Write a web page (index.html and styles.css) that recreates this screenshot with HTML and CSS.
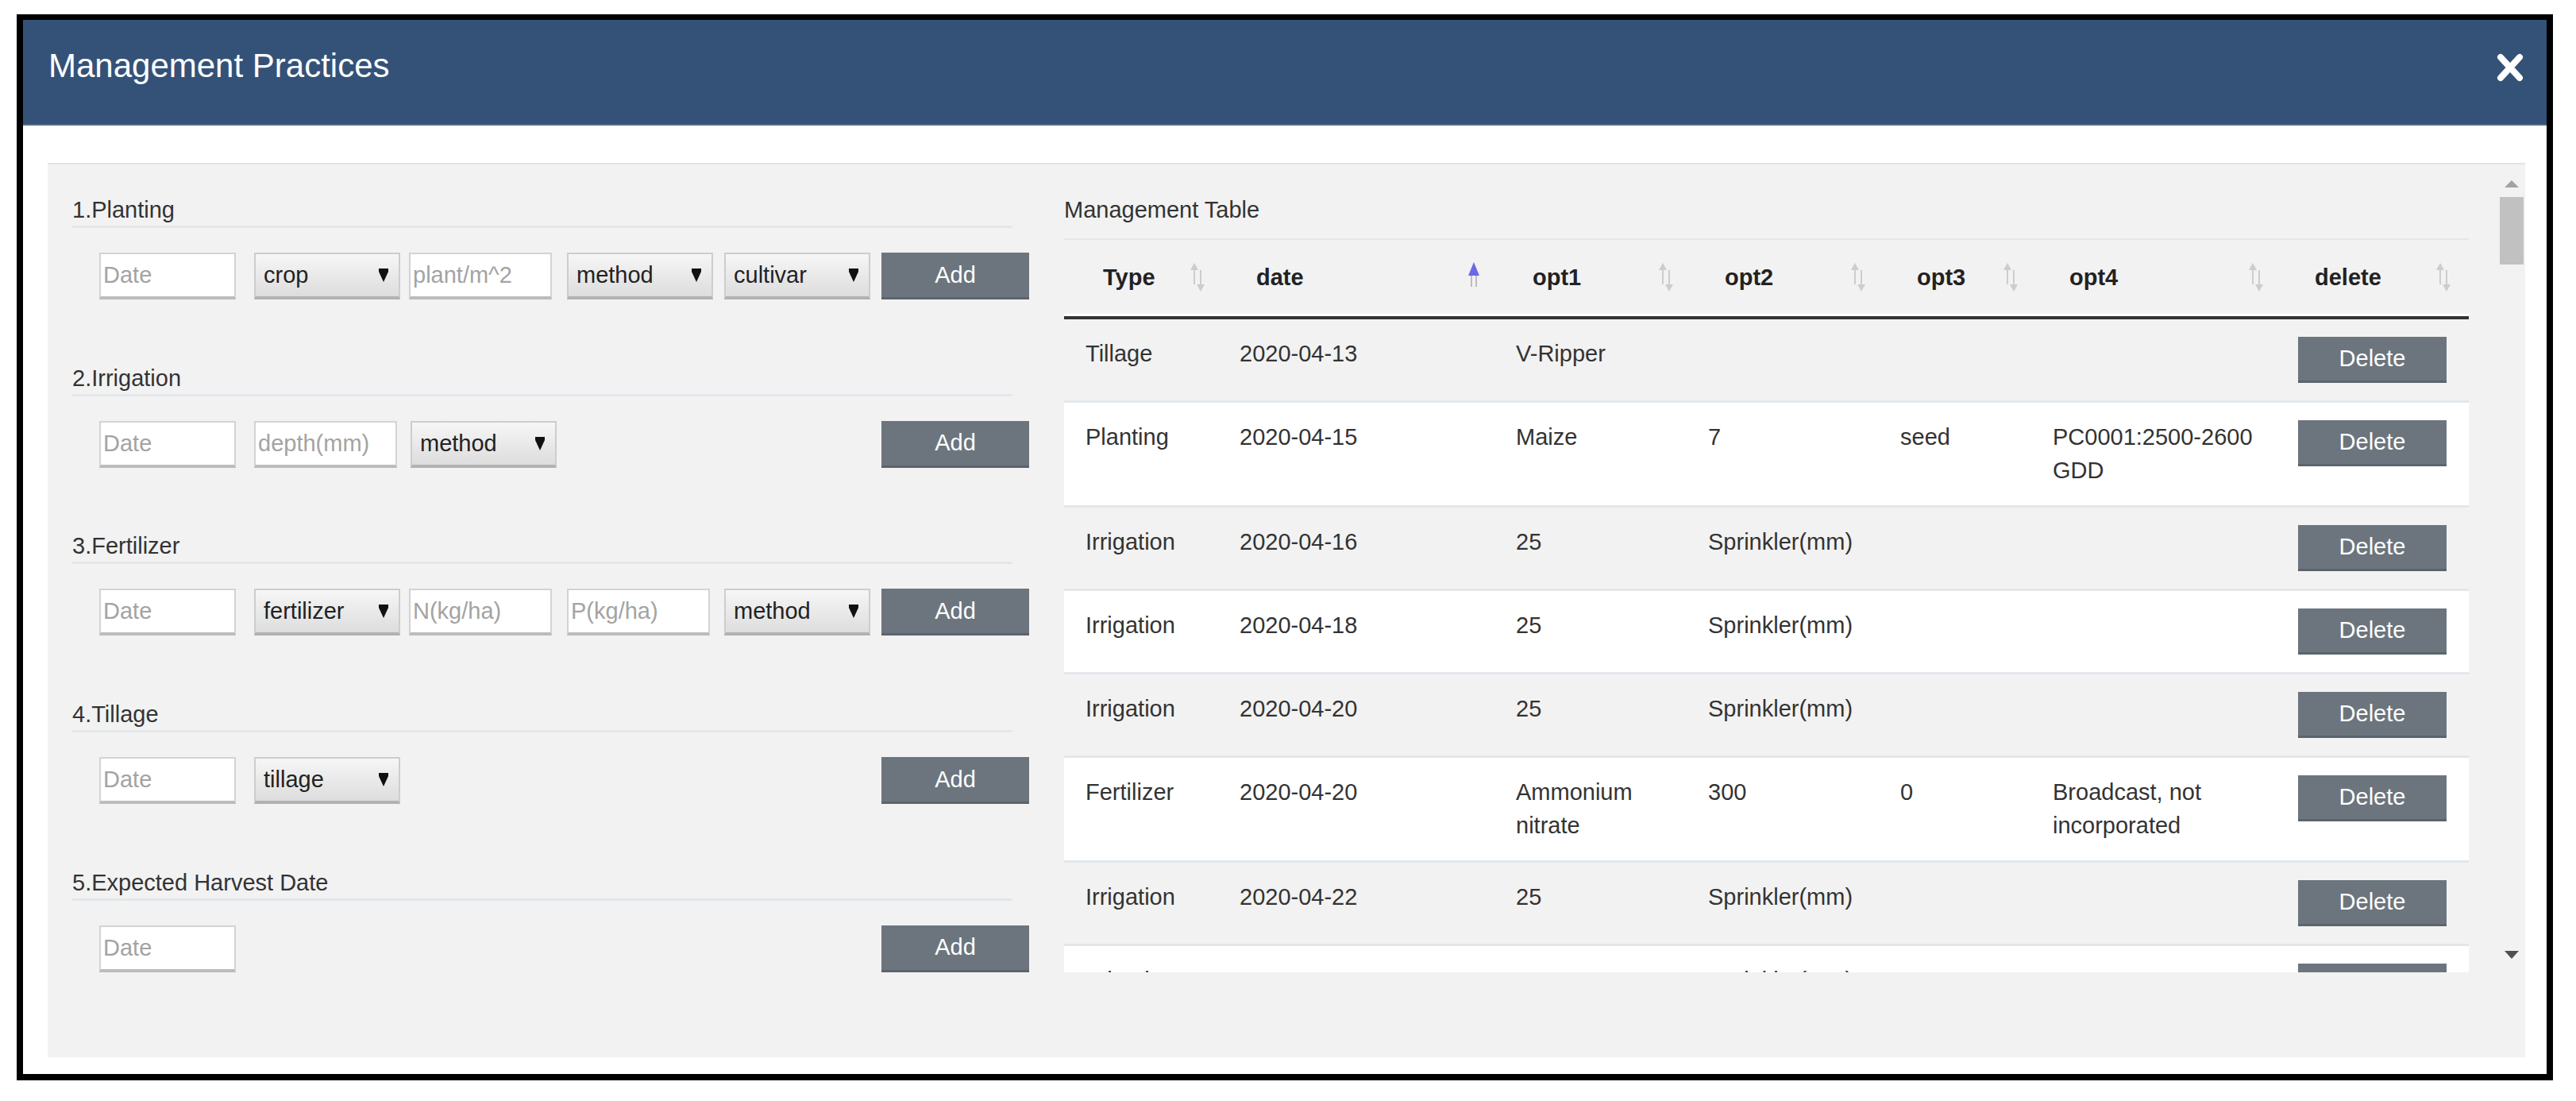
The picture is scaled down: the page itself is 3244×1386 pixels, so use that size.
FILE: index.html
```html
<!DOCTYPE html>
<html lang="en">
<head>
<meta charset="utf-8">
<title>Management Practices</title>
<link rel="stylesheet" href="styles.css">
</head>
<body>
<div class="modal">
  <header class="modal-header">
    <h1 class="modal-title">Management Practices</h1>
    <button class="close" aria-label="Close">
      <svg width="34" height="36" viewBox="0 0 34 36"><path d="M5 5 L29 31 M29 5 L5 31" stroke="#fff" stroke-width="8" stroke-linecap="round"/></svg>
    </button>
  </header>
  <div class="modal-body">
    <div class="panel">
      <div class="scroll">
        <div class="left">
          <section class="sec">
            <h2 class="sec-title">1.Planting</h2>
            <div class="form-row">
              <input class="in" placeholder="Date">
              <div class="sel ml23"><span>crop</span><svg class="caret" width="14" height="17" viewBox="0 0 14 17"><path d="M1 0H13V4L7 17L1 4Z"/></svg></div>
              <input class="in w180 ml11" placeholder="plant/m^2">
              <div class="sel ml19"><span>method</span><svg class="caret" width="14" height="17" viewBox="0 0 14 17"><path d="M1 0H13V4L7 17L1 4Z"/></svg></div>
              <div class="sel ml14"><span>cultivar</span><svg class="caret" width="14" height="17" viewBox="0 0 14 17"><path d="M1 0H13V4L7 17L1 4Z"/></svg></div>
              <button class="btn add">Add</button>
            </div>
          </section>
          <section class="sec">
            <h2 class="sec-title">2.Irrigation</h2>
            <div class="form-row">
              <input class="in" placeholder="Date">
              <input class="in w180 ml23" placeholder="depth(mm)">
              <div class="sel ml17"><span>method</span><svg class="caret" width="14" height="17" viewBox="0 0 14 17"><path d="M1 0H13V4L7 17L1 4Z"/></svg></div>
              <button class="btn add">Add</button>
            </div>
          </section>
          <section class="sec">
            <h2 class="sec-title">3.Fertilizer</h2>
            <div class="form-row">
              <input class="in" placeholder="Date">
              <div class="sel ml23"><span>fertilizer</span><svg class="caret" width="14" height="17" viewBox="0 0 14 17"><path d="M1 0H13V4L7 17L1 4Z"/></svg></div>
              <input class="in w180 ml11" placeholder="N(kg/ha)">
              <input class="in w180 ml19" placeholder="P(kg/ha)">
              <div class="sel ml18"><span>method</span><svg class="caret" width="14" height="17" viewBox="0 0 14 17"><path d="M1 0H13V4L7 17L1 4Z"/></svg></div>
              <button class="btn add">Add</button>
            </div>
          </section>
          <section class="sec">
            <h2 class="sec-title">4.Tillage</h2>
            <div class="form-row">
              <input class="in" placeholder="Date">
              <div class="sel ml23"><span>tillage</span><svg class="caret" width="14" height="17" viewBox="0 0 14 17"><path d="M1 0H13V4L7 17L1 4Z"/></svg></div>
              <button class="btn add">Add</button>
            </div>
          </section>
          <section class="sec">
            <h2 class="sec-title">5.Expected Harvest Date</h2>
            <div class="form-row">
              <input class="in" placeholder="Date">
              <button class="btn add">Add</button>
            </div>
          </section>
        </div>

        <div class="right">
          <h2 class="table-title">Management Table</h2>
          <table class="mt">
            <colgroup>
              <col class="c-type"><col class="c-date"><col class="c-o1"><col class="c-o2"><col class="c-o3"><col class="c-o4"><col class="c-del">
            </colgroup>
            <thead>
              <tr>
                <th><div class="th"><span>Type</span><svg class="si" width="20" height="38" viewBox="0 0 20 38"><path fill="#cdcdcd" d="M6 1L11 10H7V28H5V10H1Z M14 37L19 28H15V10H13V28H9Z"/></svg></div></th>
                <th><div class="th"><span>date</span><svg class="si" width="20" height="38" viewBox="0 0 20 38"><path fill="#6a6ae6" d="M10 0L17 17H3Z"/><path fill="#bdbdbd" d="M6 17H8V31H6Z M12 17H14V31H12Z"/></svg></div></th>
                <th><div class="th"><span>opt1</span><svg class="si" width="20" height="38" viewBox="0 0 20 38"><path fill="#cdcdcd" d="M6 1L11 10H7V28H5V10H1Z M14 37L19 28H15V10H13V28H9Z"/></svg></div></th>
                <th><div class="th"><span>opt2</span><svg class="si" width="20" height="38" viewBox="0 0 20 38"><path fill="#cdcdcd" d="M6 1L11 10H7V28H5V10H1Z M14 37L19 28H15V10H13V28H9Z"/></svg></div></th>
                <th><div class="th"><span>opt3</span><svg class="si" width="20" height="38" viewBox="0 0 20 38"><path fill="#cdcdcd" d="M6 1L11 10H7V28H5V10H1Z M14 37L19 28H15V10H13V28H9Z"/></svg></div></th>
                <th><div class="th"><span>opt4</span><svg class="si" width="20" height="38" viewBox="0 0 20 38"><path fill="#cdcdcd" d="M6 1L11 10H7V28H5V10H1Z M14 37L19 28H15V10H13V28H9Z"/></svg></div></th>
                <th><div class="th"><span>delete</span><svg class="si" width="20" height="38" viewBox="0 0 20 38"><path fill="#cdcdcd" d="M6 1L11 10H7V28H5V10H1Z M14 37L19 28H15V10H13V28H9Z"/></svg></div></th>
              </tr>
            </thead>
            <tbody>
              <tr><td>Tillage</td><td>2020-04-13</td><td>V-Ripper</td><td></td><td></td><td></td><td><button class="btn del">Delete</button></td></tr>
              <tr><td>Planting</td><td>2020-04-15</td><td>Maize</td><td>7</td><td>seed</td><td>PC0001:2500-2600 GDD</td><td><button class="btn del">Delete</button></td></tr>
              <tr><td>Irrigation</td><td>2020-04-16</td><td>25</td><td>Sprinkler(mm)</td><td></td><td></td><td><button class="btn del">Delete</button></td></tr>
              <tr><td>Irrigation</td><td>2020-04-18</td><td>25</td><td>Sprinkler(mm)</td><td></td><td></td><td><button class="btn del">Delete</button></td></tr>
              <tr><td>Irrigation</td><td>2020-04-20</td><td>25</td><td>Sprinkler(mm)</td><td></td><td></td><td><button class="btn del">Delete</button></td></tr>
              <tr><td>Fertilizer</td><td>2020-04-20</td><td>Ammonium nitrate</td><td>300</td><td>0</td><td>Broadcast, not incorporated</td><td><button class="btn del">Delete</button></td></tr>
              <tr><td>Irrigation</td><td>2020-04-22</td><td>25</td><td>Sprinkler(mm)</td><td></td><td></td><td><button class="btn del">Delete</button></td></tr>
              <tr><td>Irrigation</td><td>2020-04-24</td><td>25</td><td>Sprinkler(mm)</td><td></td><td></td><td><button class="btn del">Delete</button></td></tr>
            </tbody>
          </table>
        </div>

        <div class="scrollbar" aria-hidden="true">
          <div class="sb-btn sb-up"><svg width="18" height="9" viewBox="0 0 18 9"><path fill="#a3a3a3" d="M9 0L18 9H0Z"/></svg></div>
          <div class="sb-thumb"></div>
          <div class="sb-space"></div>
          <div class="sb-btn sb-down"><svg width="18" height="10" viewBox="0 0 18 10"><path fill="#505050" d="M0 0H18L9 10Z"/></svg></div>
        </div>
      </div>
    </div>
  </div>
</div>
</body>
</html>
```

FILE: styles.css
```css
* { box-sizing: border-box; }

html, body {
  margin: 0;
  padding: 0;
  background: #fff;
}

body {
  font-family: "Liberation Sans", Arial, Helvetica, sans-serif;
  color: #333;
  width: 3244px;
  height: 1386px;
  overflow: hidden;
}

.modal {
  margin: 18px 0 0 21px;
  width: 3194px;
  height: 1342px;
  border-style: solid;
  border-color: #000;
  border-width: 7px 8px 8px 8px;
  background: #fff;
  display: flex;
  flex-direction: column;
}

.modal-header {
  flex: none;
  height: 133px;
  background: #345278;
  border-bottom: 2px solid #4f6789;
  display: flex;
  align-items: center;
  justify-content: space-between;
  padding: 0 29px 16px 32px;
}

.modal-title {
  margin: 0;
  font-size: 42px;
  line-height: 48px;
  font-weight: normal;
  color: #fff;
}

.close {
  border: 0;
  background: transparent;
  padding: 0;
  margin-top: 5px;
  display: flex;
}

.modal-body {
  flex: 1;
  padding: 47px 27px 21px 31px;
}

.panel {
  height: 100%;
  background: #f2f2f2;
  border-top: 2px solid #dfe4e9;
  padding-top: 5px;
}

.scroll {
  height: 1012px;
  display: flex;
  overflow: hidden;
}

/* ---------- left column ---------- */
.left {
  flex: none;
  width: 1280px;
  padding: 32px 0 0 31px;
  display: flex;
  flex-direction: column;
  gap: 78.7px;
}

.sec-title {
  margin: 0;
  width: 1184px;
  font-size: 29px;
  line-height: 40px;
  font-weight: normal;
  color: #333;
  border-bottom: 3px solid #e3e7eb;
}

.form-row {
  margin: 31px 0 0 34px;
  width: 1171px;
  height: 59px;
  display: flex;
}

.in {
  flex: none;
  width: 172px;
  height: 59px;
  border: 2px solid #d3d3d3;
  border-bottom: 4px solid #bcbcbc;
  background: #fff;
  font: 29px "Liberation Sans", Arial, sans-serif;
  color: #333;
  padding: 0 3px;
  outline: none;
  margin: 0;
}

.in::placeholder { color: #a3a3a3; }

.w180 { width: 180px; }

.sel {
  flex: none;
  width: 184px;
  height: 59px;
  border: 2px solid #cdcdcd;
  border-bottom: 4px solid #b2b2b2;
  background: linear-gradient(#f6f6f6, #dddddd);
  display: flex;
  align-items: center;
  justify-content: space-between;
  padding: 0 12px 0 10px;
  font-size: 29px;
  color: #222;
}

.caret { fill: #111; }

.ml11 { margin-left: 11px; }
.ml14 { margin-left: 14px; }
.ml17 { margin-left: 17px; }
.ml18 { margin-left: 18px; }
.ml19 { margin-left: 19px; }
.ml23 { margin-left: 23px; }

.btn {
  border: 0;
  border-bottom: 3px solid #5c646c;
  background: #6c757d;
  color: #fff;
  font: 29px "Liberation Sans", Arial, sans-serif;
  padding: 0;
  margin: 0;
}

.add {
  flex: none;
  width: 186px;
  height: 59px;
  margin-left: auto;
}

/* ---------- right column ---------- */
.right {
  flex: none;
  width: 1769px;
  padding-top: 32px;
}

.table-title {
  margin: 0 0 16px;
  font-size: 29px;
  line-height: 40px;
  font-weight: normal;
  color: #333;
}

.mt {
  width: 1769px;
  table-layout: fixed;
  border-collapse: separate;
  border-spacing: 0;
  font-size: 29px;
  line-height: 42.5px;
}

.c-type { width: 200px; }
.c-date { width: 348px; }
.c-o1 { width: 242px; }
.c-o2 { width: 242px; }
.c-o3 { width: 192px; }
.c-o4 { width: 309px; }
.c-del { width: 236px; }

.mt th {
  text-align: left;
  font-weight: bold;
  color: #222;
  padding: 26px 22px 27px 42px;
  border-top: 2px solid #e3e7eb;
  border-bottom: 4px solid #333;
  box-shadow: inset 0 -3px 0 #fff;
}

.mt th:first-child { padding-left: 49px; }

.th {
  display: flex;
  align-items: center;
  justify-content: space-between;
}

.si { flex: none; display: block; }

.mt td {
  padding: 22px 21px;
  vertical-align: top;
  border-bottom: 3px solid #e3e7eb;
  color: #333;
}

.mt td:first-child { padding-left: 27px; }
.mt td:nth-child(6) { padding-right: 8px; }

.mt tbody tr:nth-child(even) td { background: #fff; }

.del {
  display: block;
  width: 187px;
  height: 58px;
}

/* ---------- scrollbar ---------- */
.scrollbar {
  flex: none;
  width: 35px;
  margin-left: auto;
  display: flex;
  flex-direction: column;
  align-items: center;
}

.sb-btn {
  width: 100%;
  display: flex;
  justify-content: center;
  align-items: flex-start;
}

.sb-up { height: 34px; padding-top: 15px; }
.sb-down { height: 38px; padding-top: 11px; }

.sb-thumb {
  width: 30px;
  height: 85px;
  margin-top: 2px;
  background: #c1c1c1;
}

.sb-space { flex: 1; }
```
